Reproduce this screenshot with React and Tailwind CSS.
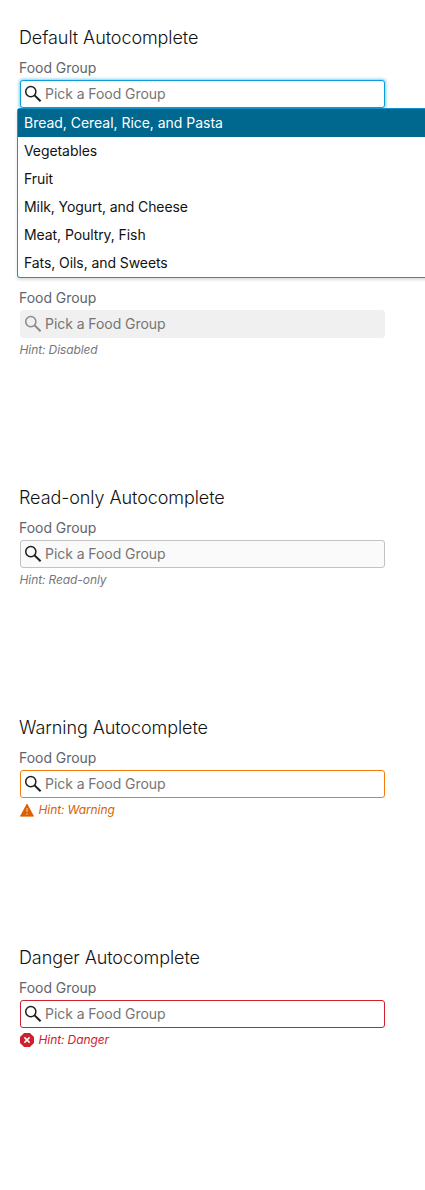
import React from "react";

const options = [
  "Bread, Cereal, Rice, and Pasta",
  "Vegetables",
  "Fruit",
  "Milk, Yogurt, and Cheese",
  "Meat, Poultry, Fish",
  "Fats, Oils, and Sweets",
];

function SearchIcon({ className }) {
  return (
    <svg className={className} width="18" height="18" viewBox="0 0 18 18" fill="none" stroke="currentColor">
      <circle cx="6.8" cy="6.6" r="5.1" strokeWidth="1.5" />
      <path d="M10.6 10.4 16.6 16.2" strokeWidth="2" />
    </svg>
  );
}

function WarningIcon() {
  return (
    <svg className="mr-[5px]" width="14" height="14" viewBox="0 0 14 14">
      <path d="M7 1 13.6 13.2H.4Z" fill="#d95f00" stroke="#d95f00" strokeWidth=".7" strokeLinejoin="round" />
      <path d="M7 5v4M7 10.2v1.5" stroke="#efad7a" strokeWidth="1.5" />
    </svg>
  );
}

function DangerIcon() {
  return (
    <svg className="mr-[5px]" width="14" height="14" viewBox="0 0 14 14">
      <path d="M4.1 0h5.8L14 4.1v5.8L9.9 14H4.1L0 9.9V4.1Z" fill="#cf2030" />
      <path d="m4.4 4.4 5.2 5.2m0-5.2L4.4 9.6" stroke="#fff" strokeWidth="1.5" />
    </svg>
  );
}

function Section({ title, box, iconColor = "text-[#1d1d1f]", hint, hintColor = "text-[#77777a]", hintIcon, children }) {
  return (
    <section className="h-[230px] pt-1.5">
      <h2 className="-ml-px h-6 text-[18px] leading-6 font-light tracking-[-0.08px] whitespace-nowrap text-[#121214]">
        {title}
      </h2>
      <div className="mt-2 -ml-px h-5 text-[14px] leading-5 tracking-[-0.04px] text-[#626469]">Food Group</div>
      <div className="relative mt-0.5 w-[365px]">
        <div className={`flex h-7 items-center rounded-[3px] border pl-[3px] ${box}`}>
          <SearchIcon className={`shrink-0 ${iconColor}`} />
          <input
            className="ml-[3px] min-w-0 flex-1 bg-transparent text-[14px] leading-5 tracking-[-0.06px] outline-none placeholder:text-[#757575]"
            placeholder="Pick a Food Group"
            readOnly
          />
        </div>
        {children}
      </div>
      {hint && (
        <div
          className={`mt-0.5 flex h-5 items-center text-[12px] leading-5 tracking-[-0.1px] italic ${hintColor}`}
        >
          {hintIcon}
          <span className="-ml-[0.5px]">{hint}</span>
        </div>
      )}
    </section>
  );
}

function Menu() {
  return (
    <ul className="absolute top-7 -left-[3px] z-10 w-[420px] rounded-[3px] border border-[#1896c4] border-t-[#0a94c8] bg-white text-[14px] tracking-[-0.08px] text-[#121214] shadow-[0_2px_3px_rgba(0,0,0,0.14)]">
      {options.map((option, i) => (
        <li
          key={option}
          className={`h-7 pl-1.5 leading-7 whitespace-nowrap ${i === 0 ? "bg-[#00678f] tracking-[-0.03px] text-white" : ""}`}
        >
          {option}
        </li>
      ))}
    </ul>
  );
}

export default function App() {
  return (
    <main className="h-[1190px] w-full overflow-hidden bg-white px-5 pt-5 font-['Inter',sans-serif]">
      <Section
        title="Default Autocomplete"
        box="border-[#0a9ddb] bg-white shadow-[0_0_3px_1px_rgba(10,157,219,0.5)]"
      >
        <Menu />
      </Section>
      <Section
        box="border-[#f0f0f0] bg-[#f0f0f0]"
        iconColor="text-[#8a8a8c]"
        hint="Hint: Disabled"
      />
      <Section title="Read-only Autocomplete" box="border-[#c2c2c4] bg-[#fafafa]" hint="Hint: Read-only" />
      <Section
        title="Warning Autocomplete"
        box="border-[#f57c0a] bg-white"
        hint="Hint: Warning"
        hintColor="text-[#d95f00]"
        hintIcon={<WarningIcon />}
      />
      <Section
        title="Danger Autocomplete"
        box="border-[#cf2030] bg-white"
        hint="Hint: Danger"
        hintColor="text-[#cf2030]"
        hintIcon={<DangerIcon />}
      />
    </main>
  );
}
